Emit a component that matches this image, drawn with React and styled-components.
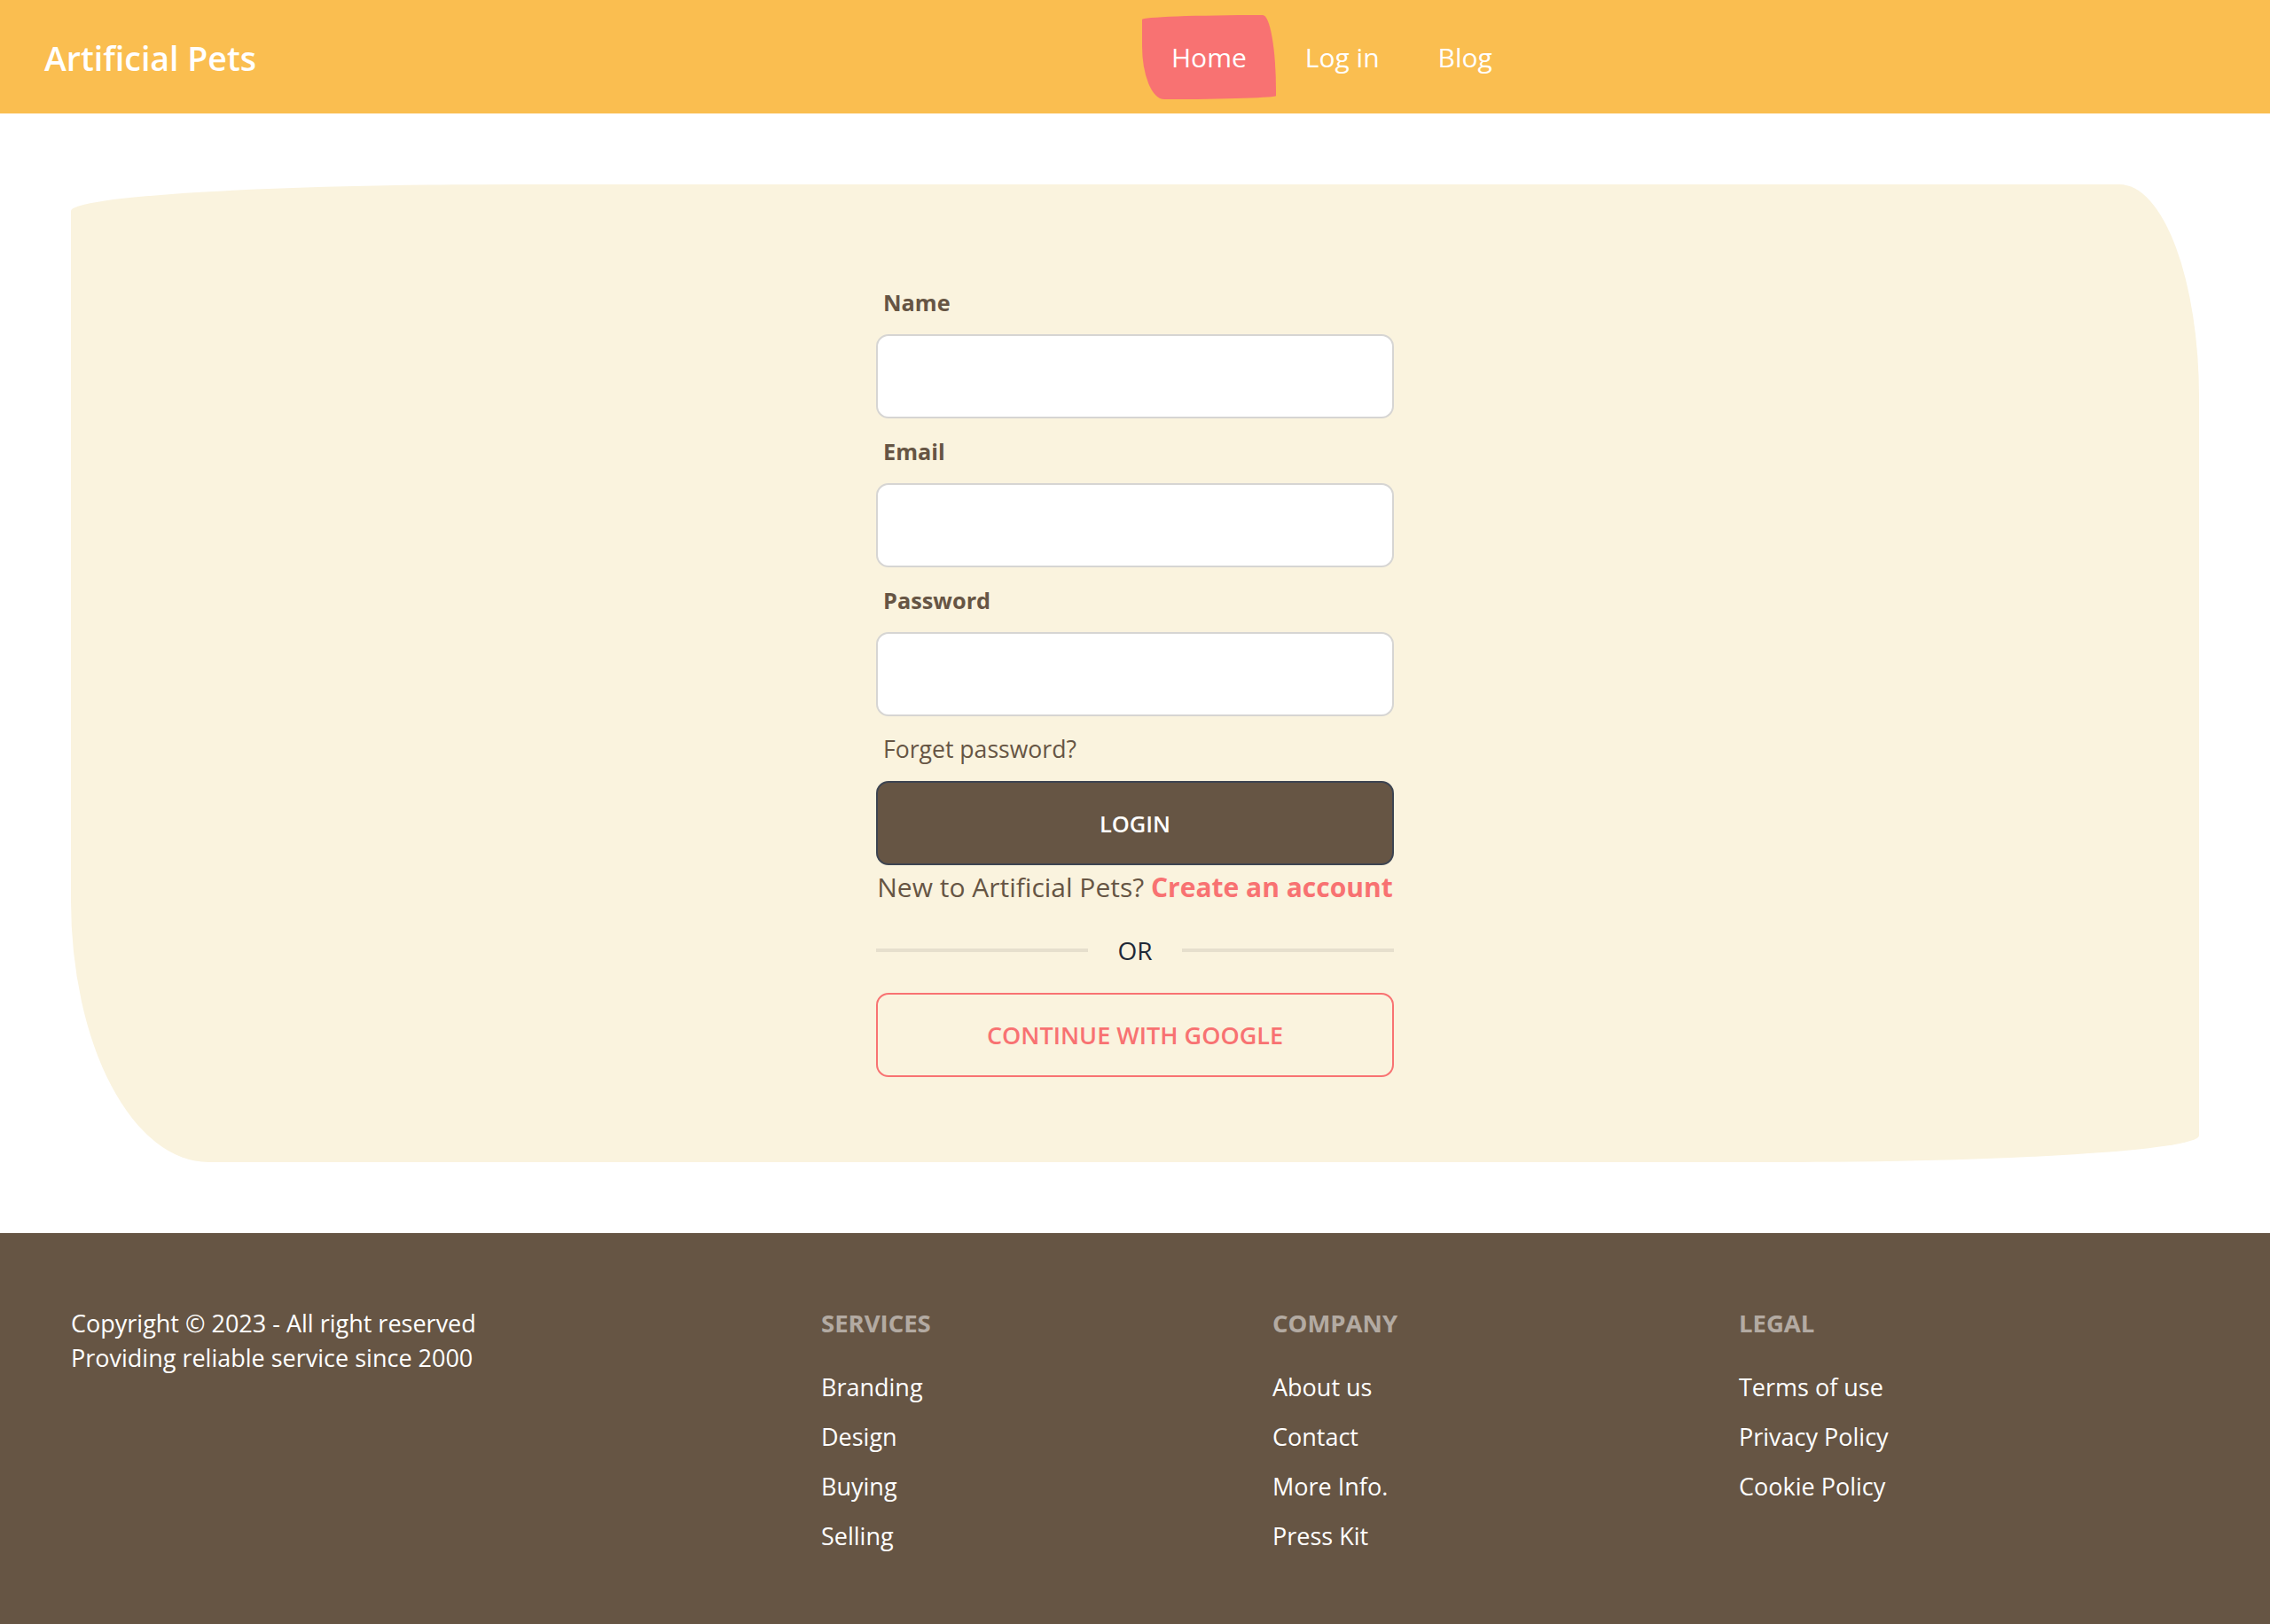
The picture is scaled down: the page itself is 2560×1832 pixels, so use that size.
import React from 'react'
import styled, { createGlobalStyle } from 'styled-components'

const GlobalStyle = createGlobalStyle`
  * { box-sizing: border-box; }
  body {
    margin: 0;
    background: #ffffff;
    font-family: 'Open Sans', 'Noto Sans', sans-serif;
    color: #665544;
  }
  a { text-decoration: none; }
`

const Header = styled.header`
  height: 128px;
  background: #fabe50;
  display: grid;
  grid-template-columns: 1fr 1fr;
  align-items: center;
  padding: 0 50px;
`

const Logo = styled.a`
  font-size: 37.5px;
  font-weight: 600;
  color: #ffffff;
  padding-top: 2px;
`

const Nav = styled.nav`
  display: flex;
  align-items: center;
  margin-left: 8px;
`

const NavLink = styled.a`
  height: 95px;
  display: flex;
  align-items: center;
  padding: 0 33px;
  font-size: 30px;
  color: #ffffff;
  background: ${p => (p.$active ? '#f87272' : 'transparent')};
  border-radius: 135px 15px 125px 25px / 5px 85px 4px 60px;
`

const Main = styled.main`
  padding: 80px;
`

const Card = styled.section`
  background: #faf3de;
  padding: 105px 0 96px;
  border-radius: 500px 90px 480px 155px / 30px 240px 30px 295px;
`

const Form = styled.form`
  width: 584px;
  margin: 0 auto;
  display: flex;
  flex-direction: column;
`

const Label = styled.label`
  height: 56px;
  display: flex;
  align-items: center;
  padding: 0 8px;
  font-size: ${p => (p.$plain ? '26.6px' : '25.3px')};
  font-weight: ${p => (p.$plain ? 400 : 700)};
  color: #665544;
`

const Input = styled.input`
  height: 95px;
  margin: 8px 0 9px;
  border: 2px solid #d6d5d3;
  border-radius: 14px;
  background: #ffffff;
  font: inherit;
  padding: 0 24px;
`

const PrimaryButton = styled.button`
  height: 95px;
  margin-top: 8px;
  background: #665544;
  border: 2px solid #3d4451;
  border-radius: 14px;
  color: #ffffff;
  font-family: inherit;
  font-size: 25.5px;
  font-weight: 600;
  text-transform: uppercase;
`

const Prompt = styled.p`
  margin: 5px 0 0;
  line-height: 40px;
  text-align: center;
  font-size: 30px;
  color: #665544;
  white-space: nowrap;
`

const Accent = styled.a`
  color: #f87272;
  font-weight: 700;
`

const Divider = styled.div`
  margin-top: 31px;
  display: flex;
  align-items: center;
  gap: 33px;
  line-height: 40px;
  font-size: 28px;
  color: #1f2937;

  &::before,
  &::after {
    content: '';
    flex: 1;
    height: 4px;
    background: #e6dfcd;
  }
`

const OutlineButton = styled.button`
  height: 95px;
  margin-top: 28px;
  background: transparent;
  border: 2px solid #f87272;
  border-radius: 14px;
  color: #f87272;
  font-family: inherit;
  font-size: 27px;
  font-weight: 600;
  text-transform: uppercase;
`

const Footer = styled.footer`
  background: #665544;
  color: #ffffff;
  padding: 82px 80px 80px;
  display: grid;
  grid-template-columns: 846px 509px 526px 1fr;
  font-size: 27px;
  line-height: 39px;
`

const Note = styled.p`
  margin: 0;
`

const Column = styled.div`
  display: flex;
  flex-direction: column;
  gap: 17px;
`

const ColumnTitle = styled.h6`
  margin: 0 0 16px;
  font-size: 27.5px;
  font-weight: 700;
  text-transform: uppercase;
  opacity: 0.5;
`

const FooterLink = styled.a`
  color: #ffffff;
`

const columns = [
  { title: 'Services', links: ['Branding', 'Design', 'Buying', 'Selling'] },
  { title: 'Company', links: ['About us', 'Contact', 'More Info.', 'Press Kit'] },
  { title: 'Legal', links: ['Terms of use', 'Privacy Policy', 'Cookie Policy'] }
]

function Field({ label, type = 'text' }) {
  return (
    <>
      <Label>{label}</Label>
      <Input type={type} />
    </>
  )
}

export default function App() {
  return (
    <>
      <GlobalStyle />
      <Header>
        <Logo href="#">Artificial Pets</Logo>
        <Nav>
          <NavLink href="#" $active>Home</NavLink>
          <NavLink href="#">Log in</NavLink>
          <NavLink href="#">Blog</NavLink>
        </Nav>
      </Header>
      <Main>
        <Card>
          <Form onSubmit={e => e.preventDefault()}>
            <Field label="Name" />
            <Field label="Email" type="email" />
            <Field label="Password" type="password" />
            <Label $plain>Forget password?</Label>
            <PrimaryButton type="submit">Login</PrimaryButton>
            <Prompt>
              New to Artificial Pets? <Accent href="#">Create an account</Accent>
            </Prompt>
            <Divider>OR</Divider>
            <OutlineButton type="button">Continue with Google</OutlineButton>
          </Form>
        </Card>
      </Main>
      <Footer>
        <div>
          <Note>Copyright © 2023 - All right reserved</Note>
          <Note>Providing reliable service since 2000</Note>
        </div>
        {columns.map(col => (
          <Column key={col.title}>
            <ColumnTitle>{col.title}</ColumnTitle>
            {col.links.map(link => (
              <FooterLink key={link} href="#">{link}</FooterLink>
            ))}
          </Column>
        ))}
      </Footer>
    </>
  )
}
